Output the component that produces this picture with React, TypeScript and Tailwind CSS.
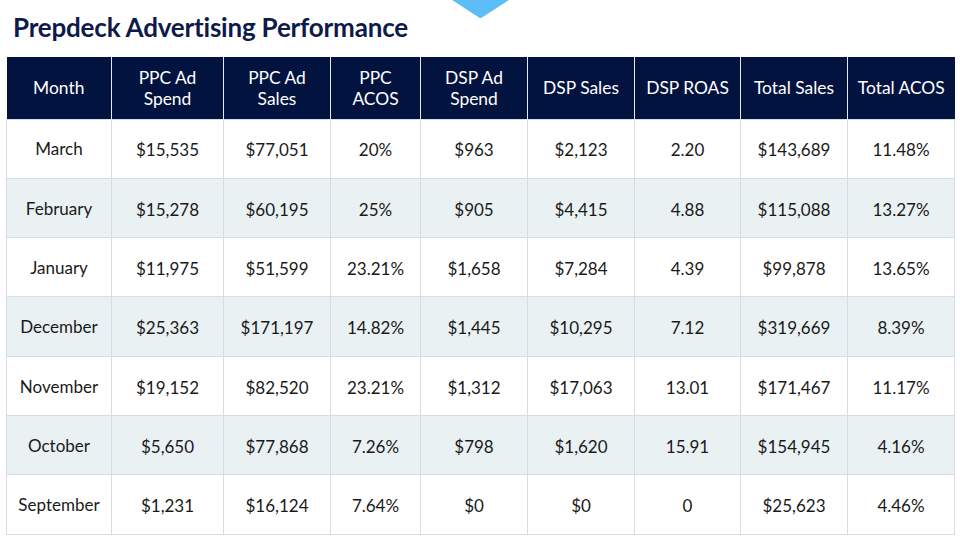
import React from 'react';

const headers = [
  ['Month'],
  ['PPC Ad', 'Spend'],
  ['PPC Ad', 'Sales'],
  ['PPC', 'ACOS'],
  ['DSP Ad', 'Spend'],
  ['DSP Sales'],
  ['DSP ROAS'],
  ['Total Sales'],
  ['Total ACOS'],
];

const widths = ['w-[105px]', 'w-[112px]', 'w-[107px]', 'w-[90px]', 'w-[107px]', 'w-[107px]', 'w-[106px]', 'w-[107px]', 'w-[107px]'];

const rows = [
  ['March', '$15,535', '$77,051', '20%', '$963', '$2,123', '2.20', '$143,689', '11.48%'],
  ['February', '$15,278', '$60,195', '25%', '$905', '$4,415', '4.88', '$115,088', '13.27%'],
  ['January', '$11,975', '$51,599', '23.21%', '$1,658', '$7,284', '4.39', '$99,878', '13.65%'],
  ['December', '$25,363', '$171,197', '14.82%', '$1,445', '$10,295', '7.12', '$319,669', '8.39%'],
  ['November', '$19,152', '$82,520', '23.21%', '$1,312', '$17,063', '13.01', '$171,467', '11.17%'],
  ['October', '$5,650', '$77,868', '7.26%', '$798', '$1,620', '15.91', '$154,945', '4.16%'],
  ['September', '$1,231', '$16,124', '7.64%', '$0', '$0', '0', '$25,623', '4.46%'],
];

export default function App() {
  return (
    <div className="relative w-[960px] h-[540px] bg-white overflow-hidden font-['Lato','Liberation_Sans',sans-serif]">
      {/* decorative marker at the top */}
      <svg className="absolute left-[452px] top-0" width="57" height="19" viewBox="0 0 57 19">
        <path d="M0 0 H57 L30 17.5 Q28.5 18.5 27 17.5 Z" fill="#5dbdf6" />
      </svg>

      <h1 className="pl-[13px] pt-[11px] h-[57px] text-[26px] leading-[32px] font-bold text-[#0d1a4b] tracking-[-0.2px]">
        Prepdeck Advertising Performance
      </h1>

      <table className="ml-[6px] border-collapse table-fixed w-[948px] text-[17px]">
        <thead>
          <tr className="h-[62px] bg-[#03133f]">
            {headers.map((h, i) => (
              <th
                key={i}
                className={`${widths[i]} p-0 font-normal text-white text-[17.4px] leading-[21px] text-center border-x border-x-[#e6e9f0] first:border-l-0 last:border-r-0`}
              >
                {h.map((line, j) => (
                  <div key={j}>{line}</div>
                ))}
              </th>
            ))}
          </tr>
        </thead>
        <tbody>
          {rows.map((r, ri) => (
            <tr key={ri} className={`h-[59.3px] ${ri % 2 === 1 ? 'bg-[#e9f1f3]' : 'bg-white'}`}>
              {r.map((c, ci) => (
                <td
                  key={ci}
                  className={`p-0 text-center text-[#1a1a1a] border border-[#d6dde4] ${ci === 0 ? 'pt-[1px]' : 'pt-[3px]'}`}
                >
                  {c}
                </td>
              ))}
            </tr>
          ))}
        </tbody>
      </table>
    </div>
  );
}
